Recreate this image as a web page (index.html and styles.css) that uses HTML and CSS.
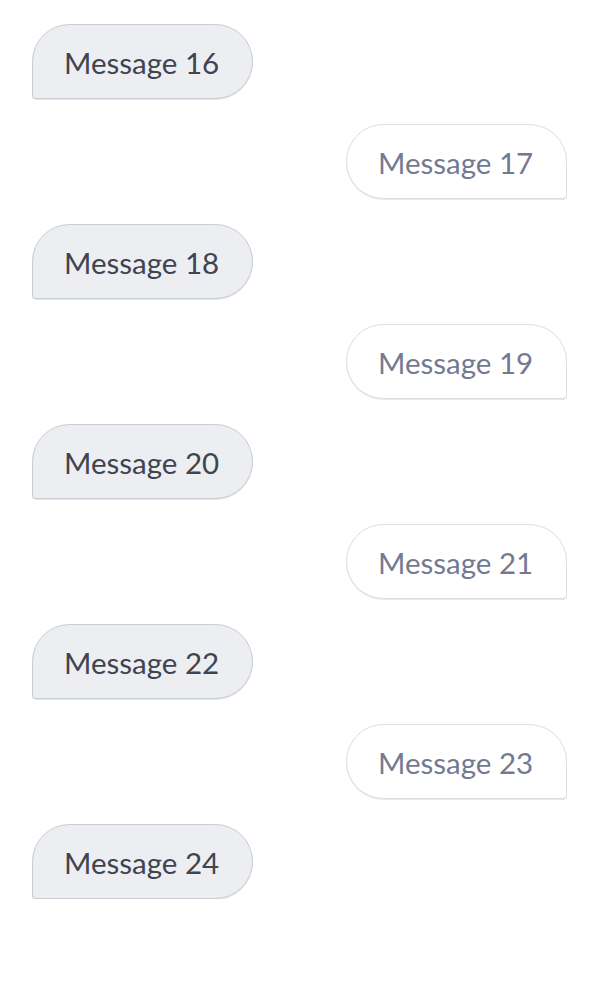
FILE: index.html
```html
<!DOCTYPE html>
<html>
<head>
<meta charset="utf-8">
<link rel="stylesheet" href="styles.css">
</head>
<body>
<div class="chat">
  <div class="msg in">Message 16</div>
  <div class="msg out">Message 17</div>
  <div class="msg in">Message 18</div>
  <div class="msg out">Message 19</div>
  <div class="msg in">Message 20</div>
  <div class="msg out">Message 21</div>
  <div class="msg in">Message 22</div>
  <div class="msg out">Message 23</div>
  <div class="msg in">Message 24</div>
</div>
</body>
</html>
```
FILE: styles.css
```css
html, body {
  margin: 0;
  padding: 0;
  background: #ffffff;
}
.chat {
  display: flex;
  flex-direction: column;
  gap: 25px;
  padding: 24px 33px 0 32px;
  font-family: Lato, "Noto Sans", sans-serif;
}
.msg {
  box-sizing: border-box;
  width: 221px;
  height: 75px;
  padding: 1px 31px 0;
  display: flex;
  align-items: center;
  font-size: 29.5px;
  border: 1px solid;
  box-shadow: 0 1px 0 rgba(60, 65, 80, 0.12);
}
.in {
  align-self: flex-start;
  background: #eceef2;
  border-color: #c9ccd2;
  color: #3f4450;
  border-radius: 38px 38px 38px 4px;
}
.out {
  align-self: flex-end;
  background: #ffffff;
  border-color: #dcdee2;
  color: #737a90;
  border-radius: 38px 38px 4px 38px;
}
```
